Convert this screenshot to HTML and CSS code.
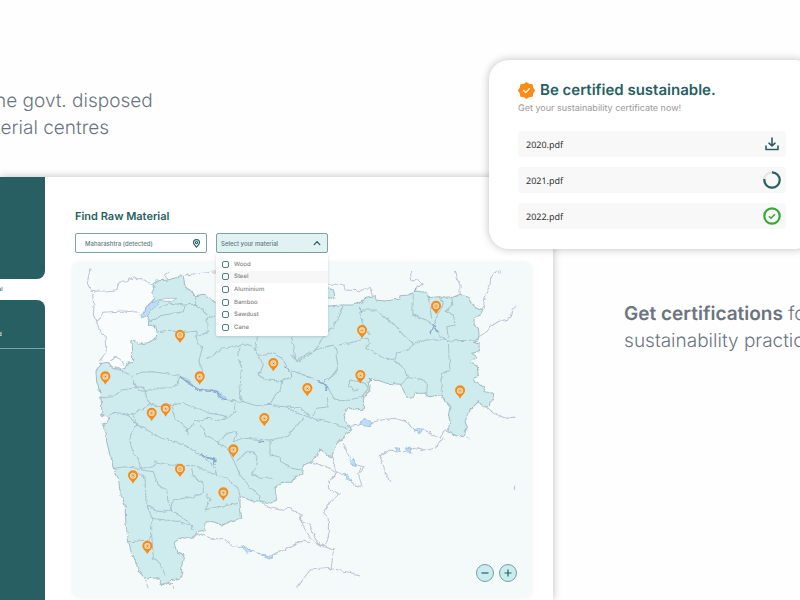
FILE: index.html
```html
<!DOCTYPE html>
<html lang="en">
<head>
<meta charset="utf-8">
<title>Raw material finder</title>
<link rel="stylesheet" href="styles.css">
</head>
<body>
<main class="stage">
  <section class="left">
    <p class="blurb blurb-left">he govt. disposed<br>terial centres</p>
    <div class="app">
      <nav class="sidebar">
        <div class="side-block side-top"></div>
        <a class="side-link side-active" href="#">al</a>
        <div class="side-block side-bottom"><a class="side-link" href="#">d</a></div>
      </nav>
      <div class="content">
        <h1>Find Raw Material</h1>
        <div class="filters">
          <button class="field location" type="button">Maharashtra (detected)
            <svg viewBox="0 0 24 24" width="9" height="9" fill="none" stroke="#275f63" stroke-width="3"><path d="M12 22C8 17 4 14 4 9.500a8 8 0 0 1 16 0C20 14 16 17 12 22z"/><circle cx="12" cy="9.500" r="3"/></svg>
          </button>
          <div class="picker">
            <button class="field select" type="button" aria-expanded="true">Select your material
              <svg viewBox="0 0 10 10" width="8" height="8" fill="none" stroke="#275f63" stroke-width="1.600" stroke-linecap="round" stroke-linejoin="round"><path d="M1.500 7 5 3.200 8.500 7"/></svg>
            </button>
            <div class="menu">
              <label><input type="checkbox">Wood</label>
              <label class="hover"><input type="checkbox">Steel</label>
              <label><input type="checkbox">Aluminium</label>
              <label><input type="checkbox">Bamboo</label>
              <label><input type="checkbox">Sawdust</label>
              <label><input type="checkbox">Cane</label>
            </div>
          </div>
        </div>
        <div class="map">
          <svg class="map-art" viewBox="6 21 1380 1008" role="img" aria-label="Map of Maharashtra">
            <defs>
              <filter id="rough" x="0" y="0" width="100%" height="100%" color-interpolation-filters="sRGB">
                <feTurbulence type="fractalNoise" baseFrequency="0.06" numOctaves="2" seed="4" result="n"/>
                <feDisplacementMap in="SourceGraphic" in2="n" scale="12" xChannelSelector="R" yChannelSelector="G"/>
              </filter>
              <g id="pin">
                <path d="M0 24C-5 14-15 9-15-1a15 15 0 0 1 30 0C15 9 5 14 0 24z" fill="#f28c1c"/>
                <circle r="9" fill="#fbe3b8"/><circle r="5" fill="none" stroke="#eda04a" stroke-width="2"/><circle r="2" fill="#6b7a70"/>
              </g>
            </defs>
            <g filter="url(#rough)">
              <path class="land" d="M60 40 52 85 80 110 68 122 78 200 100 220 110 290 95 325 115 322 125 335 165 340 187 322 185 258 240 262 260 245 235 208 215 185 255 130 245 88 196 72 150 85 140 100 80 110Z"/>
              <path class="state" d="M245 88 262 78 290 75 318 68 330 62 340 68 345 95 362 108 378 122 400 118 420 128 438 145 460 165 600 165 774 153 815 150 850 150 880 138 885 127 915 122 918 135 945 138 988 132 990 122 1015 120 1035 108 1068 112 1075 128 1105 125 1125 130 1145 128 1170 118 1195 128 1205 150 1238 165 1230 180 1212 190 1212 210 1225 220 1227 235 1225 255 1210 262 1228 268 1225 290 1205 295 1220 305 1202 322 1222 335 1225 365 1208 370 1215 382 1240 395 1245 410 1270 415 1272 432 1260 440 1258 455 1240 455 1225 440 1210 455 1195 470 1185 500 1192 520 1182 540 1160 543 1133 530 1140 500 1135 480 1140 455 1125 440 1115 420 1075 425 1065 415 1035 415 1028 430 1008 425 1000 405 990 388 950 385 930 378 905 370 895 385 900 405 880 430 880 462 855 465 835 455 820 485 830 510 845 520 820 550 800 565 785 605 765 595 750 580 745 595 725 620 700 630 698 658 675 665 665 682 635 682 615 700 620 735 600 745 575 738 545 738 510 722 510 750 515 790 490 795 455 810 430 800 405 800 405 825 380 830 365 850 340 845 312 862 320 890 342 900 335 935 335 965 310 975 275 992 265 968 225 972 205 945 195 915 180 880 175 855 168 810 165 750 150 710 145 670 130 640 120 600 110 560 108 530 98 510 122 490 95 480 95 455 92 420 80 380 78 350 95 325 115 322 125 335 150 345 165 340 172 325 187 322 188 290 185 258 195 255 205 268 240 262 260 245 255 215 235 208 238 185 215 185 225 160 245 140 255 130 245 115 252 100Z"/>
              <path class="state" d="M765 96 790 105 795 130 765 128Z"/>
              <g class="line outer">
                <path d="M60 40 52 85 62 105 82 108 110 108 140 104 148 82 172 80 190 65 202 72 215 70 245 88M82 108 68 122 72 155 70 180 80 200 90 190 98 172 160 168 210 172M80 200 90 232 105 245 108 290 92 318M115 322 125 335 155 345M120 315 140 303 155 318 165 332M290 75 285 58 298 50M345 60 440 50 520 62M772 91 822 91 825 105 870 107 900 97 906 120M1035 108 1040 95 1060 88 1045 75 1026 78 1022 60 1026 48M1170 118 1170 90 1160 70 1153 48M1238 165 1248 115 1260 90 1262 70 1278 45M1227 245 1250 230 1262 210 1290 198 1322 190 1328 165 1338 153"/>
                <path d="M225 972 235 1000M275 985 310 985 310 1000M365 850 380 835 412 845 440 855 455 850 485 872 515 875 550 890 600 905 700 855 720 860M575 738 590 755 630 765 655 760 695 780 695 800 720 810 735 850 750 870 765 870 775 850 775 790 762 768 785 735 808 718 775 700 775 680 800 655 770 635 720 620M750 870 790 885 783 945M680 1000 720 945 780 940 830 950 870 960M785 605 798 650 815 655 855 690 875 695 865 655 882 635 850 628 830 590 820 565M830 515 870 510 935 495 975 490 1010 500 1035 530 1065 525 1110 550 1120 530 1133 520M1120 548 1095 580 1065 585 1040 578 1000 590 960 585 930 602 945 650 950 665 960 680M1250 455 1270 475 1310 490 1340 485M1190 545 1200 555M1332 702 1338 685M690 780 695 805 720 850 750 870"/>
              </g>
              <g class="line">
                <path d="M262 230 310 225 350 232 380 228 382 240 412 234 410 200 420 182 438 184M235 200 280 180 340 170 345 150 375 148 378 122M265 160 300 145 342 150M375 148 400 165 412 182M378 238 382 265 398 275 390 305 385 325 398 345 385 375M412 310 440 295 460 278 500 275 520 265 550 275 562 300 590 300 610 290 640 315 655 345 690 355 720 370M510 275 505 310 515 335 508 420 520 440M556 288 562 245M565 300 580 330 565 360 590 375 635 378 665 365 662 345M635 378 632 400 608 430 602 445M665 300 680 318 720 290M665 245 672 300 680 318M690 318 735 285 790 270 800 280 798 300M735 285 772 230M690 355 730 370"/>
                <path d="M150 345 185 362 215 352 250 350 300 358 325 362 350 372 380 402 415 404 445 415 470 435 520 440 560 452 600 448 640 455 690 458 720 485M185 362 192 380 205 405 230 410 260 400 300 398 325 385 325 365M92 428 130 425 155 405 215 395 230 410 225 425 240 445 215 465 188 475 170 480 130 475 115 480M240 445 262 455 340 445 420 475 465 482 470 492 495 470 492 445M300 445 315 490 350 520 355 540M188 475 200 510 182 540 180 560 190 595 205 615 215 640M170 480 205 510 240 530 275 550 310 560 355 575M470 492 440 495 410 490 375 500 350 530"/>
                <path d="M798 300 805 340 790 362 765 375 760 390 775 400 790 428 815 440 875 425 895 400 885 385 840 375 835 395 850 405 865 402M805 270 855 260 890 250 900 265 890 280 930 305 973 315 980 295 1015 285 1030 268 1070 255 1120 255 1135 258 1225 255M772 230 790 215 808 180 820 150M868 165 875 200 890 220 900 240M875 165 920 165 935 180 975 210 995 235 1030 268M1030 108 1028 180 1068 195 1090 210M1075 128 1080 160 1085 190M1105 125 1120 145 1105 175 1090 210M1145 128 1148 150 1128 170 1150 180 1155 210 1130 215 1135 250M1090 210 1108 240 1130 255M1135 258 1138 325 1140 345 1118 355 1112 380 1117 415M973 315 1008 345 1015 365 992 390M1015 368 1050 372 1072 385 1070 420M772 430 775 455 740 460 725 490 700 480M725 490 770 500 830 520M700 480 640 455M730 375 760 385"/>
                <path d="M350 575 395 600 440 612M390 510 410 540 445 565 470 580 485 605 495 625 510 660 535 690 565 720 572 740M445 565 470 535 500 530 490 560 520 550 600 555 650 545 700 490M600 555 600 600 630 605 632 620 665 640 698 645M500 618 530 590 552 590 560 615 555 640 545 655 570 670 610 670M130 640 170 635 200 640 215 640 250 635 255 620 300 630 380 632 410 650 440 655M205 655 225 670 228 740 245 790 245 840 235 855 175 860M215 645 250 650 265 690 290 705 295 745 305 765 310 735 370 725 400 710 398 680 370 665 365 640M228 750 255 765 270 770 300 765 355 800 370 825M245 790 285 795 330 800 370 815M245 840 250 910 270 925 285 960M405 765 420 735 410 715M405 765 440 755 475 750 510 745M395 600 435 640 440 660 470 670 505 700 510 720"/>
              </g>
              <g class="water">
                <path d="M212 180 228 160 245 140 262 137 270 142 258 155 240 165 235 182 220 190ZM868 508 882 490 905 500 900 515 880 512ZM1032 525 1045 520 1060 525 1050 535ZM975 578 990 580 985 590ZM1005 580 1020 580 1022 598ZM840 620 850 610 858 630 845 632ZM820 655 835 660 845 680 832 675ZM515 872 548 888 530 895ZM565 895 610 905 605 912ZM440 410 470 425 460 435 445 425Z"/>
              </g>
              <path class="river" d="M330 365 380 402 440 412 470 435M385 602 415 605 430 610 435 630M395 600 440 618M868 155 875 170M1080 235 1090 210 1100 230M745 380 765 390 770 405M1030 110 1038 100M640 335 658 345M895 370 905 378M565 558 585 560"/>
            </g>
            <path d="M265 135 290 130 320 130 305 140 280 138Z" fill="#f8fcfd" stroke="#a3afbb" stroke-width="2"/>
            <circle cx="1288" cy="51" r="4" fill="none" stroke="#b4bec8" stroke-width="2"/>
            <use href="#pin" x="330" y="240"/><use href="#pin" x="106" y="365"/><use href="#pin" x="389" y="365"/><use href="#pin" x="245" y="474"/><use href="#pin" x="287" y="461"/><use href="#pin" x="583" y="490"/><use href="#pin" x="610" y="325"/><use href="#pin" x="712" y="400"/><use href="#pin" x="1098" y="153"/><use href="#pin" x="876" y="226"/><use href="#pin" x="871" y="361"/><use href="#pin" x="1170" y="407"/><use href="#pin" x="490" y="584"/><use href="#pin" x="330" y="642"/><use href="#pin" x="189" y="662"/><use href="#pin" x="460" y="713"/><use href="#pin" x="232" y="873"/>
          </svg>
          <div class="zoom">
            <button type="button" aria-label="Zoom out"><svg viewBox="0 0 16 16" width="16" height="16"><path d="M4.500 8h7" stroke="#275f63" stroke-width="1.200"/></svg></button>
            <button type="button" aria-label="Zoom in"><svg viewBox="0 0 16 16" width="16" height="16"><path d="M4.500 8h7M8 4.500v7" stroke="#275f63" stroke-width="1.200"/></svg></button>
          </div>
        </div>
      </div>
    </div>
  </section>
  <section class="right">
    <p class="blurb"><strong>Get certifications</strong> for<br>sustainability practices</p>
  </section>
  <article class="card">
    <h2><svg viewBox="0 0 24 24" width="17" height="17"><path fill="#fa8c16" stroke="#fa8c16" stroke-width="2" stroke-linejoin="round" d="M12 1 15.500 3.500 19.800 4.200 20.500 8.500 23 12 20.500 15.500 19.800 19.800 15.500 20.500 12 23 8.500 20.500 4.200 19.800 3.500 15.500 1 12 3.500 8.500 4.200 4.200 8.500 3.500Z"/><path d="m8 12 3 3 5-5.500" fill="none" stroke="#fff" stroke-width="1.800" stroke-linecap="round"/></svg>Be certified sustainable.</h2>
    <p>Get your sustainability certificate now!</p>
    <ul>
      <li>2020.pdf<button type="button" aria-label="Download"><svg viewBox="0 0 18 18" width="18" height="18" fill="none" stroke="#275f63" stroke-width="1.600" stroke-linecap="round" stroke-linejoin="round"><path d="M9 3v8M6 8.200 9 11 12 8.200M3 11v3.500h12V11"/></svg></button></li>
      <li>2021.pdf<svg viewBox="0 0 18 18" width="18" height="18" fill="none" stroke-width="2.200"><circle cx="9" cy="9" r="7.700" stroke="#e2e6e6"/><path d="M9 1.300A7.700 7.700 0 1 1 1.400 8" stroke="#275f63"/></svg></li>
      <li>2022.pdf<svg viewBox="0 0 18 18" width="18" height="18" fill="none" stroke="#36a936"><circle cx="9" cy="9" r="7.700" stroke-width="2.200"/><path d="m6 9.200 2 2 4-4" stroke-width="1.600"/></svg></li>
    </ul>
  </article>
</main>
</body>
</html>
```
FILE: styles.css
```css
* { box-sizing: border-box; }
body { margin: 0; background: #fefefe; font-family: Inter, sans-serif; text-rendering: geometricPrecision; }
h1, h2, p, ul { margin: 0; padding: 0; }
button { font: inherit; color: inherit; }
svg { flex: none; }

.stage {
  position: relative;
  display: grid;
  grid-template-columns: minmax(0, 224fr) minmax(0, 100fr);
  height: 100vh;
  overflow: hidden;
}
.blurb { font-size: 19px; line-height: 27px; font-weight: 300; color: #6b7480; white-space: nowrap; }
.blurb strong { font-weight: 600; }
.left { display: flex; flex-direction: column; }
.blurb-left { margin: 87px 0 36px -5px; }

.app {
  flex: 1;
  display: flex;
  background: #fff;
  box-shadow: 0 0 8px rgba(0, 0, 0, .25);
}
.sidebar { width: 45px; display: flex; flex-direction: column; overflow: hidden; }
.side-block { background: #275f63; }
.side-top { height: 102px; border-radius: 0 0 8px 0; }
.side-link { font-size: 6px; line-height: 22px; color: #275f63; text-decoration: none; margin-left: -2px; }
.side-active { height: 21px; }
.side-bottom { flex: 1; border-radius: 0 8px 0 0; padding-top: 24px; }
.side-bottom .side-link { display: block; color: #fff; height: 25px; border-bottom: 1px solid #7fa3a5; }

.content { flex: 1; display: flex; flex-direction: column; padding: 32px 21px 2px 27px; }
h1 { font-size: 11px; line-height: 14px; color: #275f63; margin-left: 3px; font-weight: 600; }
.filters { display: flex; gap: 9px; margin: 10px 0 9px 3px; }
.field {
  display: flex;
  align-items: center;
  justify-content: space-between;
  width: 132px;
  height: 20px;
  padding: 0 5px 0 9px;
  border: 1px solid #7fa3a5;
  border-radius: 2px;
  background: #fff;
  font-size: 6px;
  font-weight: 500;
  color: #5b7b7e;
}
.picker { position: relative; }
.select { width: 112px; padding: 0 6px 0 4px; background: #e0f2f2; }
.menu {
  position: absolute;
  z-index: 2;
  top: 20px;
  left: 0;
  width: 112px;
  height: 83px;
  display: grid;
  padding: 5px 0 2px;
  background: #fff;
  box-shadow: 0 1px 3px rgba(0, 0, 0, .15);
  border-radius: 0 0 2px 2px;
}
.menu label { display: flex; align-items: center; gap: 5px; padding-left: 6px; font-size: 6px; font-weight: 500; color: #858585; }
.menu .hover { background: #f7f7f7; }
.menu input { appearance: none; width: 7px; height: 7px; margin: 0; border: 1px solid #4f8083; border-radius: 2px; }

.map { position: relative; flex: 1; background: #f4fafa; border-radius: 8px; box-shadow: 0 0 4px rgba(0, 0, 0, .06); }
.map-art { display: block; width: 100%; height: auto; }
.land { fill: #f8fcfd; }
.state { fill: #ceecee; stroke: #a3bcc2; stroke-width: 3; }
.line { fill: none; stroke: #a9c2ca; stroke-width: 3; }
.outer { stroke: #bcc3d2; }
.state, .line { stroke-linejoin: round; }
.water { fill: #bddcf6; stroke: #8fb4dc; stroke-width: 2; }
.river { fill: none; stroke: #86a9cc; stroke-width: 4; }
.zoom { position: absolute; right: 15px; bottom: 16px; display: flex; gap: 5px; }
.zoom button { display: grid; place-items: center; width: 18px; height: 18px; padding: 0; border: 1px solid #75a0a3; border-radius: 50%; background: #c9ecee; }

.right { padding: 300px 0 0 71px; }
.card {
  position: absolute;
  top: 60px;
  right: -15px;
  width: 326px;
  padding: 20px 29px;
  border-radius: 20px;
  background: #fff;
  box-shadow: 0 0 8px rgba(0, 0, 0, .25);
}
.card h2 { display: flex; align-items: center; gap: 5px; font-size: 15px; line-height: 20px; font-weight: 600; color: #275f63; }
.card p { font-size: 9px; line-height: 12px; margin-top: 3px; color: #999; }
.card ul { display: grid; gap: 10px; margin-top: 16px; list-style: none; }
.card li { display: flex; align-items: center; justify-content: space-between; height: 26px; padding: 0 5px 0 8px; border-radius: 3px; background: #f8f8f8; font: 9px "Noto Sans", sans-serif; color: #333; }
.card li button { display: flex; padding: 0; border: 0; background: none; }
```
